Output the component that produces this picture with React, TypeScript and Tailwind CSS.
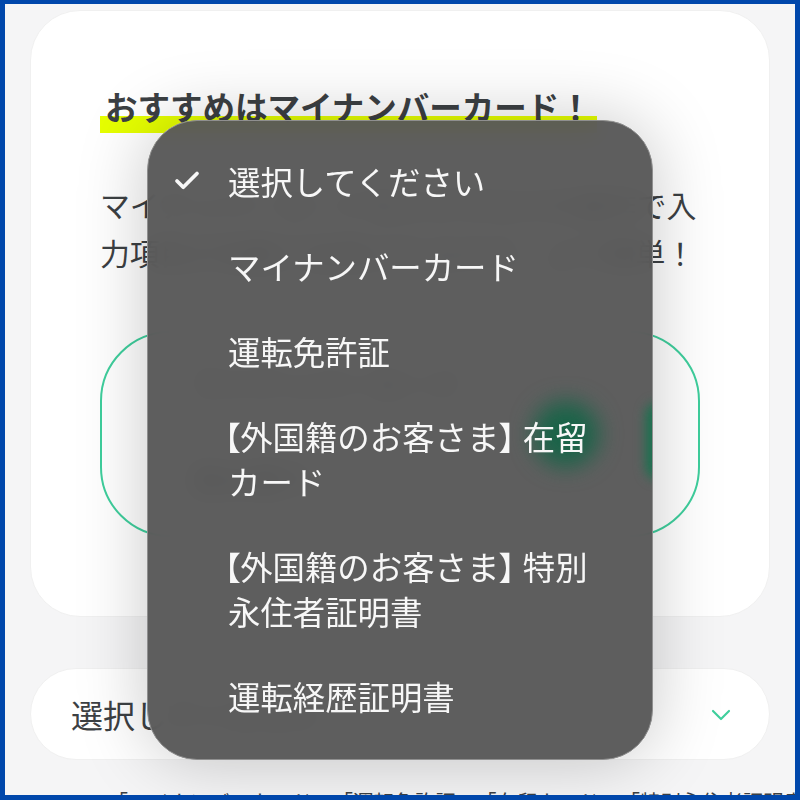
import { Check, ChevronDown } from "lucide-react";

const font = "font-['Noto_Sans_CJK_JP','Noto_Sans',sans-serif]";

function Bracket({ children }: { children: string }) {
  return <span className="[font-feature-settings:'palt']">{children}</span>;
}

export default function App() {
  return (
    <div className={`relative h-[800px] w-[800px] overflow-hidden border-x-[5px] border-t-[4px] border-b-[5px] border-[#0047ab] bg-[#f5f5f6] px-[25px] pt-[6px] text-[#3c4043] ${font}`}>
      <section className="h-[607px] rounded-[50px] border border-[#f0f0f0] bg-white px-[69px] pt-[71px]">
        <h2 className="inline-block h-[51px] w-[497px] bg-[linear-gradient(transparent_66%,#e6ff00_66%)] px-[5px] text-[32.5px] leading-[48px] font-bold whitespace-nowrap">
          おすすめはマイナンバーカード！
        </h2>
        <p className="mt-[47px] w-[600px] text-[29.85px] leading-[48px]">
          マイナンバーカードをかざすだけの操作で入力項目が自動で反映されるので、より簡単！
        </p>
        <div className="mt-[55px] h-[206px] w-[600px] rounded-[70px] border-2 border-[#3fcf9d] px-[90px] pt-[28px] text-[30px] leading-[45px] font-medium">
          マイナンバーカード
          <div className="mt-[50px]">読み取り</div>
        </div>
      </section>

      <div className="mt-[51px] flex h-[92px] items-center justify-between rounded-full border border-[#f0f0f0] bg-white pr-[32px] pl-[40px] text-[32px]">
        <span>選択してください</span>
        <ChevronDown className="mt-[2px] h-[32px] w-[32px] text-[#3fcf9d]" strokeWidth={1.6} />
      </div>

      <p className="mt-[25px] pl-[41px] text-[20.5px] leading-8 whitespace-nowrap [text-spacing-trim:space-all]">
        <span className="mr-[16px]">※</span>「マイナンバーカード」「運転免許証」「在留カード」「特別永住者証明書」
      </p>

      {/* native style picker laid over the page */}
      <div className="absolute top-[116px] left-[142px] h-[640px] w-[506px] overflow-hidden rounded-[50px] border border-[#8f8f8f] bg-[#555555]/95 pt-[17px] text-[32.4px] leading-[45px] text-[#f7f7f7] shadow-[0_0_70px_rgba(0,0,0,0.22)] backdrop-blur-md">
        <div className="absolute top-[280px] left-[385px] h-[66px] w-[66px] rounded-full bg-[#1b6449] blur-[11px]" />
        <div className="absolute top-[282px] left-[498px] h-[76px] w-[24px] rounded-full bg-[#17734f] blur-[6px]" />
        <div className="relative">
          <div className="flex py-[20px] pr-[60px] pl-[80px]">
            <Check className="absolute top-[28px] left-[24px] h-[30px] w-[30px]" strokeWidth={3} />
            選択してください
          </div>
          <div className="py-[20px] pr-[60px] pl-[80px]">マイナンバーカード</div>
          <div className="py-[20px] pr-[60px] pl-[80px]">運転免許証</div>
          <div className="py-[20px] pr-[60px] pl-[76px]">
            <Bracket>【</Bracket>外国籍のお客さま<Bracket>】</Bracket> 在留<br /><span className="ml-[4px]">カード</span>
          </div>
          <div className="py-[20px] pr-[60px] pl-[76px]">
            <Bracket>【</Bracket>外国籍のお客さま<Bracket>】</Bracket> 特別<br /><span className="ml-[4px]">永住者証明書</span>
          </div>
          <div className="py-[20px] pr-[60px] pl-[80px]">運転経歴証明書</div>
        </div>
      </div>
    </div>
  );
}
